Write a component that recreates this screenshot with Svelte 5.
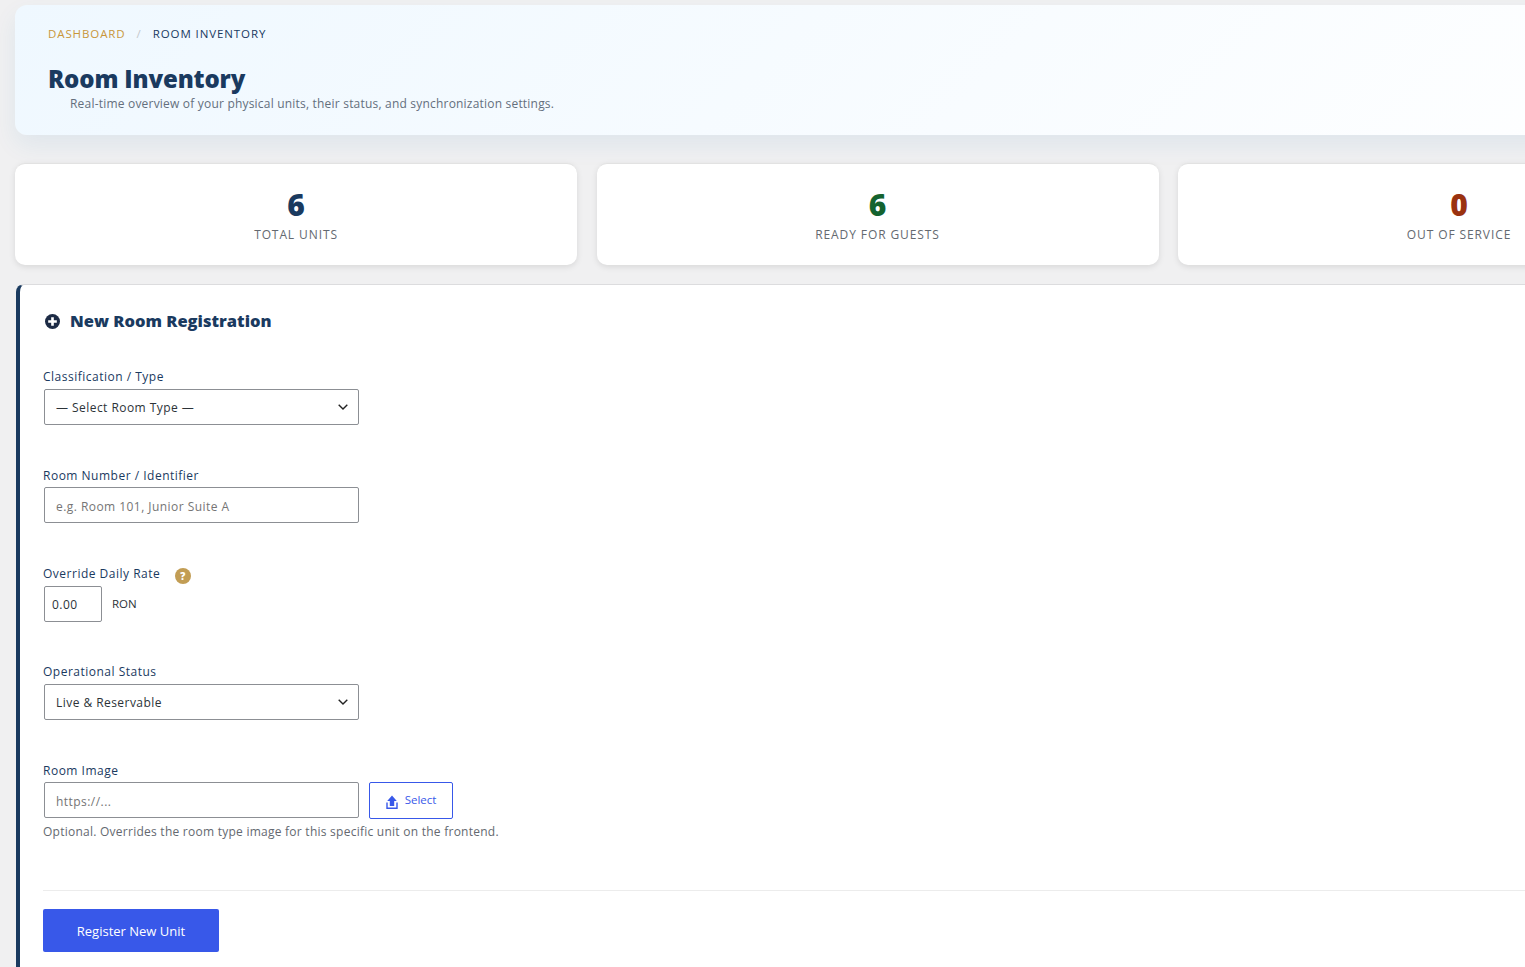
<script>
  let roomType = $state('');
  let roomNumber = $state('');
  let rate = $state('0.00');
  let status = $state('live');
  let imageUrl = $state('');

  const stats = [
    { value: 6, label: 'Total Units', tone: 'navy' },
    { value: 6, label: 'Ready for Guests', tone: 'green' },
    { value: 0, label: 'Out of Service', tone: 'red' }
  ];
</script>

<div class="page">
  <header class="hero">
    <nav class="breadcrumbs">
      <a href="#top">Dashboard</a>
      <span class="sep">/</span>
      <span class="current">Room Inventory</span>
    </nav>
    <h1>Room Inventory</h1>
    <p class="lead">Real-time overview of your physical units, their status, and synchronization settings.</p>
  </header>

  <section class="stats">
    {#each stats as stat}
      <div class="stat">
        <div class="stat-value {stat.tone}">{stat.value}</div>
        <div class="stat-label">{stat.label}</div>
      </div>
    {/each}
  </section>

  <section class="panel">
    <h2>
      <svg class="plus" viewBox="0 0 16 16" width="15" height="15" aria-hidden="true">
        <circle cx="8" cy="8" r="8" fill="#1d2b45" />
        <path d="M8 3.4v9.2M3.4 8h9.2" stroke="#fff" stroke-width="2.8" />
      </svg>
      New Room Registration
    </h2>

    <div class="field">
      <label for="room-type">Classification / Type</label>
      <select id="room-type" bind:value={roomType}>
        <option value="">— Select Room Type —</option>
      </select>
    </div>

    <div class="field">
      <label for="room-number">Room Number / Identifier</label>
      <input id="room-number" type="text" placeholder="e.g. Room 101, Junior Suite A" bind:value={roomNumber} />
    </div>

    <div class="field">
      <label for="room-rate">Override Daily Rate <span class="help">?</span></label>
      <div class="rate-row">
        <input id="room-rate" class="rate" type="text" bind:value={rate} />
        <span class="currency">RON</span>
      </div>
    </div>

    <div class="field">
      <label for="room-status">Operational Status</label>
      <select id="room-status" bind:value={status}>
        <option value="live">Live &amp; Reservable</option>
      </select>
    </div>

    <div class="field last">
      <label for="room-image">Room Image</label>
      <div class="image-row">
        <input id="room-image" type="text" placeholder="https://..." bind:value={imageUrl} />
        <button type="button" class="select-btn">
          <svg viewBox="0 0 12 14" width="12" height="14" aria-hidden="true">
            <path d="M6 .5 10.8 6H8.2v5H3.8V6H1.2z" fill="#3858e9" />
            <path d="M1 7.5v5.7h10V7.5" fill="none" stroke="#3858e9" stroke-width="1.4" />
          </svg>
          <span>Select</span>
        </button>
      </div>
      <p class="hint">Optional. Overrides the room type image for this specific unit on the frontend.</p>
    </div>

    <div class="actions">
      <button type="button" class="primary">Register New Unit</button>
    </div>
  </section>
</div>

<style>
  :global(body) {
    margin: 0;
    background: #f0f0f1;
    overflow-x: hidden;
  }

  .page {
    width: 1725px;
    padding: 5px 0 0 15px;
    font-family: "Open Sans", "Noto Sans", sans-serif;
    color: #1a3a5f;
  }

  .hero {
    height: 130px;
    box-sizing: border-box;
    padding: 21px 33px 0;
    border-radius: 12px;
    background: linear-gradient(135deg, #eff8ff 0%, #ffffff 100%);
    box-shadow: 0 10px 25px rgba(30, 120, 180, 0.08);
  }

  .breadcrumbs {
    display: flex;
    font-size: 11.5px;
    line-height: 16px;
    letter-spacing: 0.9px;
    text-transform: uppercase;
  }

  .breadcrumbs a {
    color: #c8963a;
    text-decoration: none;
  }

  .sep {
    margin: 0 11px;
    color: #c4c8cc;
  }

  .current {
    color: #1a3a5f;
  }

  h1 {
    margin: 21px 0 0;
    font-size: 24px;
    line-height: 32px;
    font-weight: 800;
    letter-spacing: -0.15px;
    color: #1a3a5f;
  }

  .lead {
    margin: 1px 0 0 22px;
    font-size: 12px;
    line-height: 16px;
    letter-spacing: 0.2px;
    color: #646f7d;
  }

  .stats {
    display: grid;
    grid-template-columns: repeat(3, 1fr);
    gap: 19.5px;
    margin-top: 28px;
  }

  .stat {
    height: 102px;
    box-sizing: border-box;
    padding-top: 23px;
    text-align: center;
    background: #fff;
    border-top: 1px solid #e2e2e2;
    border-radius: 10px;
    box-shadow: 0 2px 6px rgba(0, 0, 0, 0.1);
  }

  .stat-value {
    font-size: 30px;
    line-height: 36px;
    font-weight: 800;
  }

  .navy { color: #1a3a5f; }
  .green { color: #14632f; }
  .red { color: #9a3210; }

  .stat-label {
    margin-top: 4px;
    font-size: 12px;
    line-height: 16px;
    letter-spacing: 0.9px;
    text-transform: uppercase;
    color: #646970;
  }

  .panel {
    box-sizing: border-box;
    height: 700px;
    margin: 19px 0 0 1px;
    padding: 25px 0 0 23px;
    background: #fff;
    border-left: 4px solid #1a3a5f;
    border-top: 1px solid #dcdcde;
    border-radius: 8px 0 0 0;
  }

  h2 {
    display: flex;
    align-items: center;
    gap: 10px;
    margin: 0 0 37.2px 2px;
    font-size: 16.5px;
    line-height: 22px;
    font-weight: 800;
    color: #1a3a5f;
  }

  .field {
    height: 98.4px;
  }

  .field.last {
    height: 127px;
  }

  label {
    display: flex;
    font-size: 12px;
    line-height: 16px;
    letter-spacing: 0.5px;
    margin-bottom: 3.6px;
    color: #1a3a5f;
  }

  select, input {
    box-sizing: border-box;
    display: block;
    width: 315px;
    height: 36px;
    margin: 0 1px;
    padding: 2px 11px 0;
    background-color: #fff;
    border: 1px solid #8c8f94;
    border-radius: 2px;
    font-family: inherit;
    font-size: 12px;
    letter-spacing: 0.45px;
    color: #2c3338;
  }

  select {
    appearance: none;
    background-image: url("data:image/svg+xml,%3Csvg xmlns='http://www.w3.org/2000/svg' width='10' height='6'%3E%3Cpath d='M.7.7 5 5l4.3-4.3' fill='none' stroke='%23222' stroke-width='1.4'/%3E%3C/svg%3E");
    background-repeat: no-repeat;
    background-position: right 10px center;
  }

  input::placeholder {
    color: #757575;
  }

  .rate-row {
    display: flex;
    align-items: center;
  }

  .image-row {
    display: flex;
    align-items: flex-start;
  }

  input.rate {
    width: 58px;
    padding: 1px 7px 0;
  }

  .currency {
    margin-left: 9px;
    margin-top: -1px;
    font-size: 11.5px;
    color: #2c3338;
  }

  .help {
    display: flex;
    align-items: center;
    justify-content: center;
    width: 16px;
    height: 16px;
    margin: 2px 0 -2px 14.5px;
    border-radius: 50%;
    background: #c29d54;
    color: #fff;
    font-size: 10px;
    font-weight: 800;
    letter-spacing: 0;
  }

  .select-btn {
    display: flex;
    align-items: center;
    justify-content: center;
    gap: 7px;
    box-sizing: border-box;
    width: 84px;
    height: 37px;
    margin-left: 9px;
    padding: 0;
    background: #fff;
    border: 1px solid #3858e9;
    border-radius: 2px;
    font-family: inherit;
    font-size: 11.5px;
    color: #3858e9;
  }

  .select-btn span {
    margin-top: -3px;
  }

  .select-btn svg {
    margin-top: 3px;
  }

  .hint {
    margin: 5px 0 0;
    font-size: 12px;
    line-height: 16px;
    letter-spacing: 0.25px;
    color: #646970;
  }

  .actions {
    padding-top: 18px;
    border-top: 1px solid #ececec;
  }

  .primary {
    width: 176px;
    height: 43px;
    padding: 2px 0 0;
    background: #3858e9;
    border: none;
    border-radius: 2px;
    font-family: inherit;
    font-size: 13px;
    color: #fff;
  }
</style>
